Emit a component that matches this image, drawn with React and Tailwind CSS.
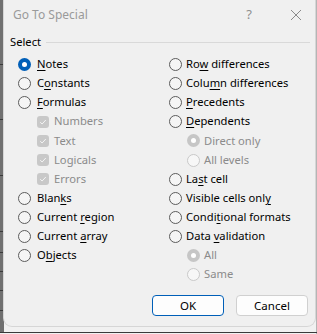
import React from "react";

const F = { fontFamily: '"Noto Sans", "Open Sans", sans-serif' };

function Radio({ checked, disabled }) {
  if (checked) {
    return (
      <span
        className={
          "flex h-[13px] w-[13px] shrink-0 items-center justify-center rounded-full " +
          (disabled ? "bg-[#c6c6c6]" : "bg-[#005fb8]")
        }
      >
        <span className="h-[5px] w-[5px] rounded-full bg-white" />
      </span>
    );
  }
  return (
    <span
      className={
        "h-[13px] w-[13px] shrink-0 rounded-full border " +
        (disabled ? "border-[#c9c9c9] bg-[#f7f7f7]" : "border-[#5c5c5c] bg-[#f5f5f5]")
      }
    />
  );
}

function Check() {
  return (
    <span className="flex h-[12px] w-[12px] shrink-0 items-center justify-center rounded-[3px] bg-[#c8c8c8]">
      <svg width="8" height="8" viewBox="0 0 8 8">
        <path d="M1.2 4.2 L3.1 6 L6.8 2" fill="none" stroke="#f4f4f4" strokeWidth="1" />
      </svg>
    </span>
  );
}

function L({ t, k }) {
  return (
    <span>
      {t.slice(0, k)}
      <u className="underline-offset-2">{t[k]}</u>
      {t.slice(k + 1)}
    </span>
  );
}

function Row({ children, indent = 0, gray }) {
  return (
    <div
      className={
        "flex h-[19.1px] items-center " + (gray ? "text-[#8b8b8b]" : "text-black")
      }
      style={indent ? { paddingLeft: indent } : undefined}
    >
      {children}
    </div>
  );
}

export default function App() {
  return (
    <div className="relative h-[334px] w-[317px] overflow-hidden bg-[#f1f1f1]" style={F}>
      {/* sheet background bits */}
      <div className="absolute left-0 top-0 h-[332px] w-[4px] bg-[#707070]" />
      {[64, 119, 175, 231, 252, 271, 290, 310].map((y) => (
        <div key={y} className="absolute left-0 h-px w-[4px] bg-[#3a3a3a]" style={{ top: y }} />
      ))}
      <div className="absolute right-0 top-0 h-[334px] w-px bg-[#b5b5b5]" />
      <div className="absolute bottom-[1px] left-0 h-px w-[317px] bg-[#3a3a3a]" />

      {/* dialog */}
      <div className="relative ml-[4px] h-[326px] w-[311px] rounded-b-[8px] bg-[#f0f0f0] shadow-[0_0_0_1px_#d6d6d6]">
        {/* title bar */}
        <div className="flex h-[29px] items-center pl-[9px] text-[12px] text-[#9a9a9a]">
          <span className="flex-1">Go To Special</span>
          <span className="w-[14px] text-center text-[13px] text-[#8f8f8f]">?</span>
          <span className="ml-[34px] mr-[13px] flex w-[12px] items-center justify-center">
            <svg width="12" height="12" viewBox="0 0 12 12">
              <path d="M1 1 L11 11 M11 1 L1 11" stroke="#8a8a8a" strokeWidth="1" />
            </svg>
          </span>
        </div>

        {/* group label */}
        <div className="flex h-[26px] items-center pl-[6px] pr-[5px] text-[11.2px] text-black">
          <span>Select</span>
          <span className="ml-[5px] h-px flex-1 bg-[#d9d9d9]" />
        </div>

        {/* options */}
        <div className="flex text-[11.2px]">
          <div className="w-[151px] pl-[14px]">
            <Row><Radio checked /><span className="ml-[6px]"><L t="Notes" k={0} /></span></Row>
            <Row><Radio /><span className="ml-[6px]"><L t="Constants" k={1} /></span></Row>
            <Row><Radio /><span className="ml-[6px]"><L t="Formulas" k={0} /></span></Row>
            <Row indent={19} gray><Check /><span className="ml-[5px]">Numbers</span></Row>
            <Row indent={19} gray><Check /><span className="ml-[5px]">Text</span></Row>
            <Row indent={19} gray><Check /><span className="ml-[5px]">Logicals</span></Row>
            <Row indent={19} gray><Check /><span className="ml-[5px]">Errors</span></Row>
            <Row><Radio /><span className="ml-[6px]"><L t="Blanks" k={4} /></span></Row>
            <Row><Radio /><span className="ml-[6px]"><L t="Current region" k={8} /></span></Row>
            <Row><Radio /><span className="ml-[6px]"><L t="Current array" k={8} /></span></Row>
            <Row><Radio /><span className="ml-[6px]"><L t="Objects" k={1} /></span></Row>
          </div>
          <div className="flex-1 pl-[14px]">
            <Row><Radio /><span className="ml-[4px]"><L t="Row differences" k={2} /></span></Row>
            <Row><Radio /><span className="ml-[4px]"><L t="Column differences" k={4} /></span></Row>
            <Row><Radio /><span className="ml-[4px]"><L t="Precedents" k={0} /></span></Row>
            <Row><Radio /><span className="ml-[4px]"><L t="Dependents" k={0} /></span></Row>
            <Row indent={18} gray><Radio checked disabled /><span className="ml-[4px]">Direct only</span></Row>
            <Row indent={18} gray><Radio disabled /><span className="ml-[4px]">All levels</span></Row>
            <Row><Radio /><span className="ml-[4px]"><L t="Last cell" k={2} /></span></Row>
            <Row><Radio /><span className="ml-[4px]"><L t="Visible cells only" k={17} /></span></Row>
            <Row><Radio /><span className="ml-[4px]"><L t="Conditional formats" k={5} /></span></Row>
            <Row><Radio /><span className="ml-[4px]"><L t="Data validation" k={5} /></span></Row>
            <Row indent={18} gray><Radio checked disabled /><span className="ml-[4px]">All</span></Row>
            <Row indent={18} gray><Radio disabled /><span className="ml-[4px]">Same</span></Row>
          </div>
        </div>

        {/* buttons */}
        <div className="mt-[11px] flex justify-end gap-[12px] pr-[7px] text-[11.5px] text-black">
          <button className="flex h-[21px] w-[72px] items-center justify-center rounded-[4px] border border-[#005fb8] bg-[#fdfdfd]">
            OK
          </button>
          <button className="flex h-[21px] w-[72px] items-center justify-center rounded-[4px] border border-[#d0d0d0] bg-[#fdfdfd]">
            Cancel
          </button>
        </div>
      </div>
    </div>
  );
}
